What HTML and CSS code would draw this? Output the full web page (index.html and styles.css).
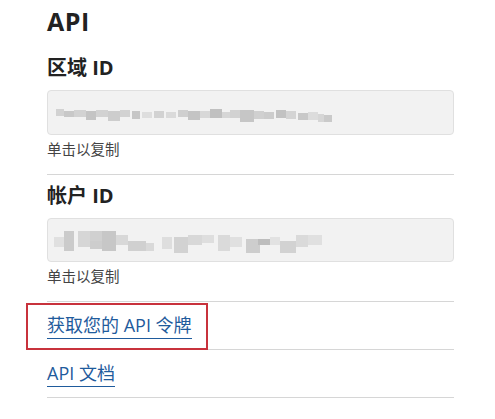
FILE: index.html
```html
<!DOCTYPE html>
<html lang="zh-CN">
<head>
<meta charset="utf-8">
<title>API</title>
<link rel="stylesheet" href="styles.css">
</head>
<body>
<main class="panel">
  <h1 class="title">API</h1>

  <section class="field-group">
    <h2 class="label">区域 ID</h2>
    <div class="copy-box">
      <svg class="blur" width="300" height="26" viewBox="0 0 300 26">
        <g fill="#d2d2d2">
          <rect x="6" y="9" width="8" height="7"/>
          <rect x="14" y="11" width="10" height="6" fill="#c8c8c8"/>
          <rect x="24" y="10" width="12" height="7"/>
          <rect x="36" y="11" width="10" height="9" fill="#c4c4c4"/>
          <rect x="46" y="10" width="12" height="7"/>
          <rect x="58" y="11" width="12" height="10" fill="#cdcdcd"/>
          <rect x="70" y="10" width="10" height="7"/>
          <rect x="82" y="11" width="8" height="8" fill="#c6c6c6"/>
          <rect x="92" y="12" width="10" height="6" fill="#dedede"/>
          <rect x="104" y="11" width="10" height="7"/>
          <rect x="116" y="12" width="10" height="6" fill="#dadada"/>
          <rect x="128" y="10" width="10" height="7" fill="#cfcfcf"/>
          <rect x="138" y="11" width="12" height="9" fill="#c4c4c4"/>
          <rect x="150" y="11" width="10" height="7" fill="#d8d8d8"/>
          <rect x="160" y="9" width="12" height="9" fill="#c0c0c0"/>
          <rect x="172" y="12" width="8" height="6" fill="#d6d6d6"/>
          <rect x="180" y="10" width="10" height="8"/>
          <rect x="190" y="10" width="14" height="12" fill="#c6c6c6"/>
          <rect x="204" y="11" width="10" height="8" fill="#d0d0d0"/>
          <rect x="214" y="12" width="10" height="7" fill="#cccccc"/>
          <rect x="226" y="10" width="10" height="8" fill="#c2c2c2"/>
          <rect x="236" y="11" width="10" height="8" fill="#d4d4d4"/>
          <rect x="248" y="13" width="10" height="7" fill="#c8c8c8"/>
          <rect x="258" y="12" width="10" height="8" fill="#dcdcdc"/>
          <rect x="268" y="14" width="6" height="8" fill="#d6d6d6"/>
          <rect x="274" y="15" width="8" height="7" fill="#cacaca"/>
        </g>
      </svg>
    </div>
    <p class="hint">单击以复制</p>
  </section>

  <section class="field-group">
    <h2 class="label">帐户 ID</h2>
    <div class="copy-box short">
      <svg class="blur" width="310" height="30" viewBox="0 0 310 30">
        <g fill="#d4d4d4">
          <rect x="4" y="12" width="10" height="10" fill="#e0e0e0"/>
          <rect x="14" y="6" width="10" height="20" fill="#cbcbcb"/>
          <rect x="28" y="6" width="12" height="16" fill="#d6d6d6"/>
          <rect x="40" y="6" width="12" height="10" fill="#d0d0d0"/>
          <rect x="40" y="16" width="12" height="8" fill="#cdcdcd"/>
          <rect x="52" y="6" width="14" height="20" fill="#c7c7c7"/>
          <rect x="66" y="10" width="12" height="10" fill="#d8d8d8"/>
          <rect x="78" y="16" width="18" height="10" fill="#d0d0d0"/>
          <rect x="96" y="18" width="8" height="8" fill="#d9d9d9"/>
          <rect x="112" y="12" width="10" height="12" fill="#dedede"/>
          <rect x="124" y="12" width="14" height="16" fill="#d2d2d2"/>
          <rect x="138" y="10" width="14" height="10" fill="#d8d8d8"/>
          <rect x="152" y="10" width="12" height="8" fill="#dedede"/>
          <rect x="168" y="10" width="12" height="16" fill="#dadada"/>
          <rect x="180" y="12" width="12" height="10" fill="#e0e0e0"/>
          <rect x="196" y="14" width="14" height="14" fill="#cdcdcd"/>
          <rect x="208" y="14" width="12" height="6" fill="#bdbdbd"/>
          <rect x="220" y="12" width="10" height="8" fill="#e2e2e2"/>
          <rect x="230" y="16" width="16" height="12" fill="#d2d2d2"/>
          <rect x="246" y="10" width="12" height="12" fill="#dadada"/>
          <rect x="258" y="10" width="14" height="10" fill="#e0e0e0"/>
        </g>
      </svg>
    </div>
    <p class="hint">单击以复制</p>
  </section>

  <ul class="links">
    <li class="link-row focused"><a href="#" class="link">获取您的 API 令牌</a></li>
    <li class="link-row"><a href="#" class="link">API 文档</a></li>
  </ul>
</main>
</body>
</html>
```

FILE: styles.css
```css
html, body {
  margin: 0;
  padding: 0;
  background: #ffffff;
}

body {
  font-family: "Open Sans", "Noto Sans CJK SC", sans-serif;
  color: #222222;
}

.panel {
  width: 407px;
  margin-left: 47px;
  padding-top: 4px;
}

.title {
  margin: 0;
  font-size: 25px;
  line-height: 34px;
  font-weight: 700;
  letter-spacing: 0.5px;
  color: #222222;
}

.field-group {
  border-bottom: 1px solid #d6d6d6;
  padding-bottom: 15px;
}

.field-group + .field-group {
  padding-top: 7px;
}

.title + .field-group {
  padding-top: 16px;
}

.label {
  margin: 0;
  font-size: 20px;
  line-height: 28px;
  font-weight: 700;
  color: #222222;
}

.copy-box {
  box-sizing: border-box;
  height: 45px;
  margin-top: 8px;
  background: #f2f2f2;
  border: 1px solid #e0e0e0;
  border-radius: 4px;
  display: flex;
  align-items: center;
  padding-left: 2px;
}

.copy-box.short {
  height: 44px;
}

.blur {
  display: block;
}

.hint {
  margin: 6px 0 0;
  font-size: 14.5px;
  line-height: 18px;
  color: #444444;
}

.links {
  list-style: none;
  margin: 0;
  padding: 0;
}

.link-row {
  border-bottom: 1px solid #d6d6d6;
  height: 47px;
  display: flex;
  align-items: center;
  position: relative;
}

.link-row.focused::before {
  content: "";
  position: absolute;
  left: -21px;
  top: 1px;
  width: 182px;
  height: 47px;
  box-sizing: border-box;
  border: 2px solid #c8323c;
}

.link {
  font-size: 18px;
  line-height: 26px;
  color: #1f5b9c;
  text-decoration: none;
  border-bottom: 1px solid #1f5b9c;
}
```
